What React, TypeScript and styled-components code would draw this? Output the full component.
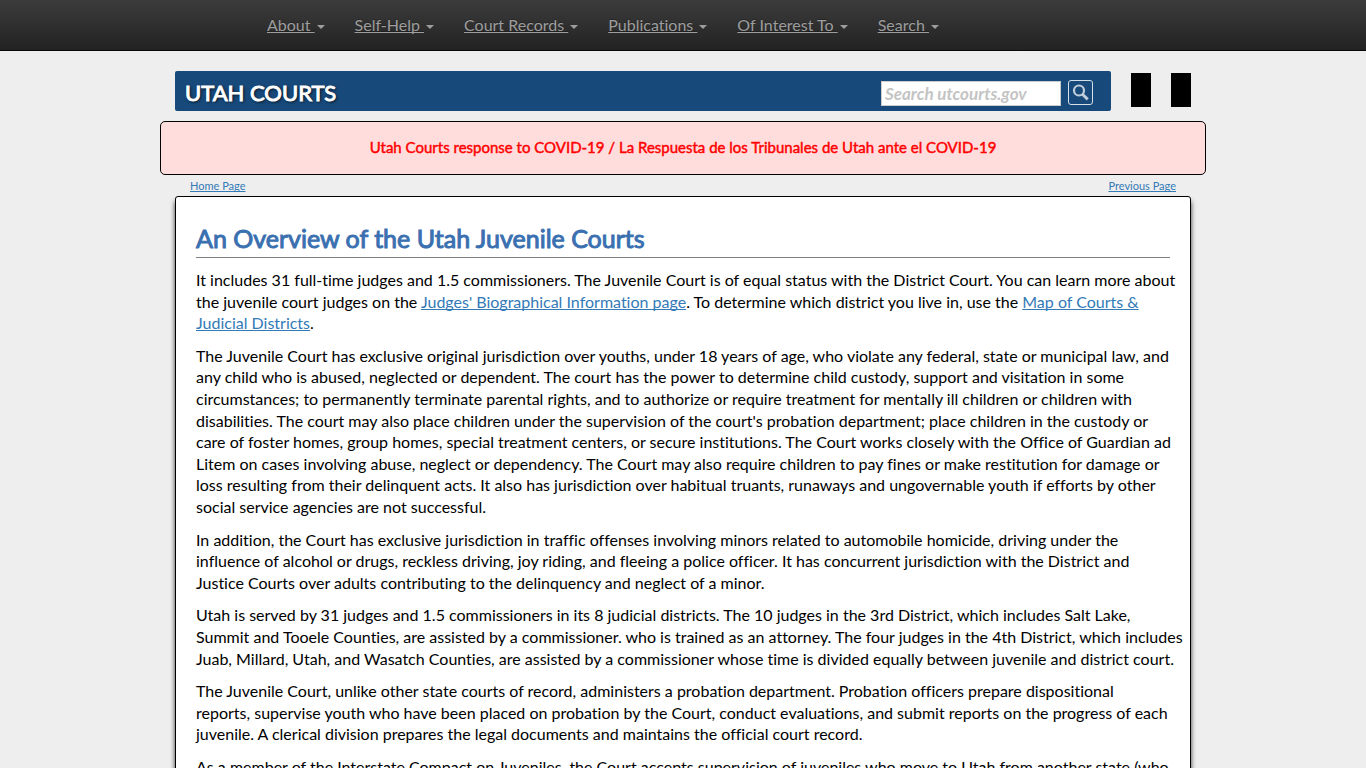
import React from "react";
import styled, { createGlobalStyle } from "styled-components";

const GlobalStyle = createGlobalStyle`
  *, *::before, *::after { box-sizing: border-box; }
  body {
    margin: 0;
    background: #eee;
    color: #000;
    font-family: Lato, "Liberation Sans", sans-serif;
    font-size: 16px;
    line-height: 1.35;
    font-variant-ligatures: none;
  }
  a { text-decoration-skip-ink: none; }
`;

const NavBar = styled.nav`
  height: 51px;
  background: linear-gradient(to bottom, #3c3c3c 0%, #222 100%);
  border-bottom: 1px solid #080808;
`;

const Container = styled.div`
  width: 100%;
  max-width: 1046px;
  margin: 0 auto;
`;

const NavList = styled.ul`
  display: flex;
  margin: 0;
  padding: 0 0 0 92px;
  list-style: none;
`;

const NavLink = styled.a`
  display: block;
  padding: 15px;
  line-height: 20px;
  color: #9d9d9d;
  white-space: pre;
  text-shadow: 0 -1px 0 rgba(0, 0, 0, 0.25);
`;

const Caret = styled.span`
  display: inline-block;
  margin-left: 2px;
  vertical-align: middle;
  border-top: 4px solid;
  border-left: 4px solid transparent;
  border-right: 4px solid transparent;
`;

const Header = styled.header`
  display: flex;
  align-items: flex-start;
  gap: 20px;
  padding: 20px 15px 10px;
`;

const Banner = styled.div`
  display: flex;
  flex: 1;
  align-items: center;
  justify-content: space-between;
  height: 40px;
  padding: 0 18px 0 10px;
  background: #17497b;
  border-radius: 2px;
`;

const SiteName = styled.a`
  color: #fff;
  font-size: 22px;
  line-height: 40px;
  padding-top: 4px;
  text-decoration: none;
  -webkit-text-stroke: 1px #fff;
  text-shadow: 1px 1px 3px #000;
`;

const SearchForm = styled.form`
  display: flex;
  align-items: flex-start;
  gap: 7px;
  padding-top: 3px;
`;

const SearchInput = styled.input`
  width: 180px;
  height: 25px;
  margin: 1px 0 0;
  padding: 2px 3px;
  border: 1px solid #ccc;
  background: #fff;
  font: inherit;
  font-size: 17px;
  color: #333;
  &::placeholder {
    color: #c4c4c4;
    font-style: italic;
    font-weight: 700;
    opacity: 1;
  }
`;

const SearchButton = styled.button`
  display: flex;
  align-items: center;
  justify-content: center;
  width: 25px;
  height: 25px;
  padding: 0;
  border: 1px solid #d5e0ea;
  border-radius: 3px;
  background: transparent;
  color: #c0cedc;
`;

const MenuButton = styled.button`
  width: 20px;
  height: 34px;
  margin: 2px 0 0;
  padding: 0;
  border: 0;
  background: #000;
`;

const Alert = styled.div`
  padding: 14px 15px 16px;
  border: 1px solid #000;
  border-radius: 5px;
  background: #fdd;
  text-align: center;
  line-height: 22px;
`;

const AlertLink = styled.a`
  color: #f00;
  font-size: 15px;
  text-decoration: none;
  -webkit-text-stroke: 0.03em;
`;

const PageLinks = styled.div`
  display: flex;
  justify-content: space-between;
  padding: 3px 30px 2px;
  font-size: 11px;
  line-height: 16px;
`;

const TextLink = styled.a`
  color: #337ab7;
`;

const Card = styled.main`
  margin: 0 15px;
  padding: 20px 20px 40px;
  border: 1px solid #000;
  border-radius: 3px;
  background: #fff;
  box-shadow: 0 5px 5px #333;
`;

const Title = styled.h1`
  margin: 0 0 11px;
  padding: 5px 0 2px;
  border-bottom: 1px solid #808080;
  color: #3a70b0;
  font-size: 25px;
  font-weight: 400;
  line-height: 33px;
  -webkit-text-stroke: 0.04em;
`;

const Article = styled.div`
  margin-right: -16px;
`;

const Paragraph = styled.p`
  margin: 0 0 11px;
`;

const menu = ["About", "Self-Help", "Court Records", "Publications", "Of Interest To", "Search"];

export default function App() {
  return (
    <>
      <GlobalStyle />
      <NavBar aria-label="Main">
        <Container>
          <NavList>
            {menu.map((label) => (
              <li key={label}>
                <NavLink href="#">{label + " "}<Caret /></NavLink>
              </li>
            ))}
          </NavList>
        </Container>
      </NavBar>
      <Container>
        <Header>
          <Banner>
            <SiteName href="#">UTAH COURTS</SiteName>
            <SearchForm>
              <SearchInput type="text" aria-label="Search utcourts.gov" placeholder="Search utcourts.gov" />
              <SearchButton type="button" aria-label="Search">
                <svg width="17" height="17" viewBox="0 0 17 17" fill="none" stroke="currentColor">
                  <circle cx="7" cy="6.5" r="5" strokeWidth="2.2" />
                  <path d="M10.7 10.5l5 4.8" strokeWidth="3" />
                </svg>
              </SearchButton>
            </SearchForm>
          </Banner>
          <MenuButton type="button" aria-label="Menu" />
          <MenuButton type="button" aria-label="Options" />
        </Header>
        <Alert>
          <AlertLink href="#">Utah Courts response to COVID-19 / La Respuesta de los Tribunales de Utah ante el COVID-19</AlertLink>
        </Alert>
        <PageLinks>
          <TextLink href="#">Home Page</TextLink>
          <TextLink href="#">Previous Page</TextLink>
        </PageLinks>
        <Card>
          <Title>An Overview of the Utah Juvenile Courts</Title>
          <Article>
            <Paragraph>
              It includes 31 full-time judges and 1.5 commissioners. The Juvenile Court is of equal status with the
              District Court. You can learn more about<br />
              the juvenile court judges on the{" "}
              <TextLink href="#">Judges' Biographical Information page</TextLink>. To determine which district you
              live in, use the <TextLink href="#">Map of Courts &amp;<br />Judicial Districts</TextLink>.
            </Paragraph>
            <Paragraph>
              The Juvenile Court has exclusive original jurisdiction over youths, under 18 years of age, who violate
              any federal, state or municipal law, and<br />
              any child who is abused, neglected or dependent. The court has the power to determine child custody,
              support and visitation in some<br />
              circumstances; to permanently terminate parental rights, and to authorize or require treatment for
              mentally ill children or children with<br />
              disabilities. The court may also place children under the supervision of the court's probation
              department; place children in the custody or<br />
              care of foster homes, group homes, special treatment centers, or secure institutions. The Court works
              closely with the Office of Guardian ad<br />
              Litem on cases involving abuse, neglect or dependency. The Court may also require children to pay fines
              or make restitution for damage or<br />
              loss resulting from their delinquent acts. It also has jurisdiction over habitual truants, runaways and
              ungovernable youth if efforts by other<br />
              social service agencies are not successful.
            </Paragraph>
            <Paragraph>
              In addition, the Court has exclusive jurisdiction in traffic offenses involving minors related to
              automobile homicide, driving under the<br />
              influence of alcohol or drugs, reckless driving, joy riding, and fleeing a police officer. It has
              concurrent jurisdiction with the District and<br />
              Justice Courts over adults contributing to the delinquency and neglect of a minor.
            </Paragraph>
            <Paragraph>
              Utah is served by 31 judges and 1.5 commissioners in its 8 judicial districts. The 10 judges in the 3rd
              District, which includes Salt Lake,<br />
              Summit and Tooele Counties, are assisted by a commissioner. who is trained as an attorney. The four
              judges in the 4th District, which includes<br />
              Juab, Millard, Utah, and Wasatch Counties, are assisted by a commissioner whose time is divided equally
              between juvenile and district court.
            </Paragraph>
            <Paragraph>
              The Juvenile Court, unlike other state courts of record, administers a probation department. Probation
              officers prepare dispositional<br />
              reports, supervise youth who have been placed on probation by the Court, conduct evaluations, and submit
              reports on the progress of each<br />
              juvenile. A clerical division prepares the legal documents and maintains the official court record.
            </Paragraph>
            <Paragraph>
              As a member of the Interstate Compact on Juveniles, the Court accepts supervision of juveniles who move
              to Utah from another state (who
            </Paragraph>
          </Article>
        </Card>
      </Container>
    </>
  );
}
